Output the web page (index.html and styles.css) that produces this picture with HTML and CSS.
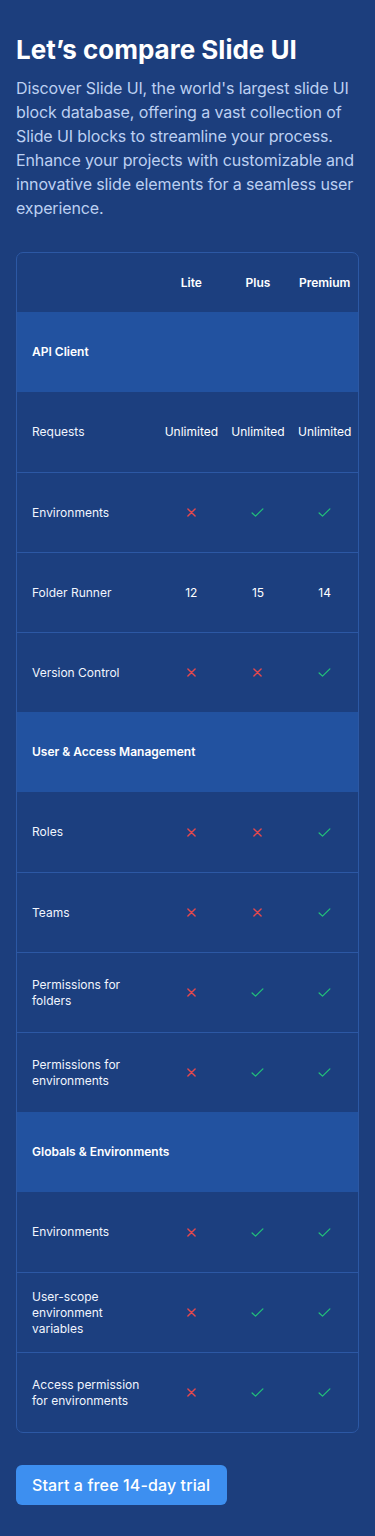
FILE: index.html
```html
<!DOCTYPE html>
<html lang="en">
<head>
<meta charset="utf-8">
<title>Compare Slide UI</title>
<link rel="stylesheet" href="styles.css">
</head>
<body>
<main class="page">
  <h1 class="title">Let’s compare Slide UI</h1>
  <p class="lead">Discover Slide UI, the world's largest slide UI block database, offering a vast collection of Slide UI blocks to streamline your process. Enhance your projects with customizable and innovative slide elements for a seamless user experience.</p>

  <div class="table">
    <div class="row head">
      <div class="cell label"></div>
      <div class="cell">Lite</div>
      <div class="cell">Plus</div>
      <div class="cell">Premium</div>
    </div>

    <div class="row section"><div class="cell label">API Client</div></div>
    <div class="row">
      <div class="cell label">Requests</div>
      <div class="cell">Unlimited</div>
      <div class="cell">Unlimited</div>
      <div class="cell">Unlimited</div>
    </div>
    <div class="row">
      <div class="cell label">Environments</div>
      <div class="cell"><svg class="no" viewBox="0 0 10 10"><path d="M1 1L9 9M9 1L1 9"/></svg></div>
      <div class="cell"><svg class="yes" viewBox="0 0 14 10"><path d="M1 5.5L4.8 9L13 1"/></svg></div>
      <div class="cell"><svg class="yes" viewBox="0 0 14 10"><path d="M1 5.5L4.8 9L13 1"/></svg></div>
    </div>
    <div class="row">
      <div class="cell label">Folder Runner</div>
      <div class="cell">12</div>
      <div class="cell">15</div>
      <div class="cell">14</div>
    </div>
    <div class="row">
      <div class="cell label">Version Control</div>
      <div class="cell"><svg class="no" viewBox="0 0 10 10"><path d="M1 1L9 9M9 1L1 9"/></svg></div>
      <div class="cell"><svg class="no" viewBox="0 0 10 10"><path d="M1 1L9 9M9 1L1 9"/></svg></div>
      <div class="cell"><svg class="yes" viewBox="0 0 14 10"><path d="M1 5.5L4.8 9L13 1"/></svg></div>
    </div>

    <div class="row section"><div class="cell label">User &amp; Access Management</div></div>
    <div class="row">
      <div class="cell label">Roles</div>
      <div class="cell"><svg class="no" viewBox="0 0 10 10"><path d="M1 1L9 9M9 1L1 9"/></svg></div>
      <div class="cell"><svg class="no" viewBox="0 0 10 10"><path d="M1 1L9 9M9 1L1 9"/></svg></div>
      <div class="cell"><svg class="yes" viewBox="0 0 14 10"><path d="M1 5.5L4.8 9L13 1"/></svg></div>
    </div>
    <div class="row">
      <div class="cell label">Teams</div>
      <div class="cell"><svg class="no" viewBox="0 0 10 10"><path d="M1 1L9 9M9 1L1 9"/></svg></div>
      <div class="cell"><svg class="no" viewBox="0 0 10 10"><path d="M1 1L9 9M9 1L1 9"/></svg></div>
      <div class="cell"><svg class="yes" viewBox="0 0 14 10"><path d="M1 5.5L4.8 9L13 1"/></svg></div>
    </div>
    <div class="row">
      <div class="cell label">Permissions for folders</div>
      <div class="cell"><svg class="no" viewBox="0 0 10 10"><path d="M1 1L9 9M9 1L1 9"/></svg></div>
      <div class="cell"><svg class="yes" viewBox="0 0 14 10"><path d="M1 5.5L4.8 9L13 1"/></svg></div>
      <div class="cell"><svg class="yes" viewBox="0 0 14 10"><path d="M1 5.5L4.8 9L13 1"/></svg></div>
    </div>
    <div class="row">
      <div class="cell label">Permissions for environments</div>
      <div class="cell"><svg class="no" viewBox="0 0 10 10"><path d="M1 1L9 9M9 1L1 9"/></svg></div>
      <div class="cell"><svg class="yes" viewBox="0 0 14 10"><path d="M1 5.5L4.8 9L13 1"/></svg></div>
      <div class="cell"><svg class="yes" viewBox="0 0 14 10"><path d="M1 5.5L4.8 9L13 1"/></svg></div>
    </div>

    <div class="row section"><div class="cell label">Globals &amp; Environments</div></div>
    <div class="row">
      <div class="cell label">Environments</div>
      <div class="cell"><svg class="no" viewBox="0 0 10 10"><path d="M1 1L9 9M9 1L1 9"/></svg></div>
      <div class="cell"><svg class="yes" viewBox="0 0 14 10"><path d="M1 5.5L4.8 9L13 1"/></svg></div>
      <div class="cell"><svg class="yes" viewBox="0 0 14 10"><path d="M1 5.5L4.8 9L13 1"/></svg></div>
    </div>
    <div class="row">
      <div class="cell label">User-scope environment variables</div>
      <div class="cell"><svg class="no" viewBox="0 0 10 10"><path d="M1 1L9 9M9 1L1 9"/></svg></div>
      <div class="cell"><svg class="yes" viewBox="0 0 14 10"><path d="M1 5.5L4.8 9L13 1"/></svg></div>
      <div class="cell"><svg class="yes" viewBox="0 0 14 10"><path d="M1 5.5L4.8 9L13 1"/></svg></div>
    </div>
    <div class="row">
      <div class="cell label">Access permission for environments</div>
      <div class="cell"><svg class="no" viewBox="0 0 10 10"><path d="M1 1L9 9M9 1L1 9"/></svg></div>
      <div class="cell"><svg class="yes" viewBox="0 0 14 10"><path d="M1 5.5L4.8 9L13 1"/></svg></div>
      <div class="cell"><svg class="yes" viewBox="0 0 14 10"><path d="M1 5.5L4.8 9L13 1"/></svg></div>
    </div>
  </div>

  <a class="cta" href="#">Start a free 14-day trial</a>
</main>
</body>
</html>
```

FILE: styles.css
```css
* { box-sizing: border-box; }
html, body {
  margin: 0;
  padding: 0;
  background: #1c3e7d;
}
body {
  font-family: Inter, "Noto Sans", "Liberation Sans", sans-serif;
  color: #ffffff;
}
.page {
  padding: 32px 16px 32px;
  display: flex;
  flex-direction: column;
  align-items: flex-start;
}
.title {
  margin: 0;
  font-size: 26px;
  line-height: 36px;
  font-weight: 700;
}
.lead {
  margin: 8px 0 0;
  font-size: 16px;
  line-height: 24px;
  letter-spacing: -0.12px;
  color: #bcd0f2;
}
.table {
  margin-top: 32px;
  width: 100%;
  border: 1px solid #2c58a4;
  border-radius: 7px;
  overflow: hidden;
  background: #1c3f7f;
}
.row {
  display: grid;
  grid-template-columns: 141px repeat(3, 1fr);
  height: 80px;
  border-top: 1px solid #2c58a4;
}
.row.head {
  height: 59px;
  border-top: none;
  font-weight: 600;
}
.row.section {
  grid-template-columns: 1fr;
  background: #2252a0;
  font-weight: 600;
  border-top: none;
}
.row.section + .row { border-top: none; }
.cell {
  display: flex;
  align-items: center;
  justify-content: center;
  font-size: 12px;
  line-height: 16px;
  color: #ffffff;
}
.cell.label {
  justify-content: flex-start;
  padding: 0 16px 0 15px;
  color: #f1f5fd;
}
.row.section .cell.label,
.row.head .cell { color: #ffffff; }
svg { display: block; fill: none; stroke-linecap: round; stroke-linejoin: round; }
svg.no { width: 9px; height: 9px; stroke: #e5484d; stroke-width: 1.6; }
svg.yes { width: 13px; height: 9px; stroke: #22c07a; stroke-width: 1.4; }
.cta {
  margin-top: 32px;
  display: inline-flex;
  align-items: center;
  height: 40px;
  padding: 0 17px 0 16px;
  background: #3d8ff0;
  border-radius: 6px;
  color: #ffffff;
  font-size: 16px;
  font-weight: 500;
  letter-spacing: 0.12px;
  line-height: 24px;
  text-decoration: none;
}
```
